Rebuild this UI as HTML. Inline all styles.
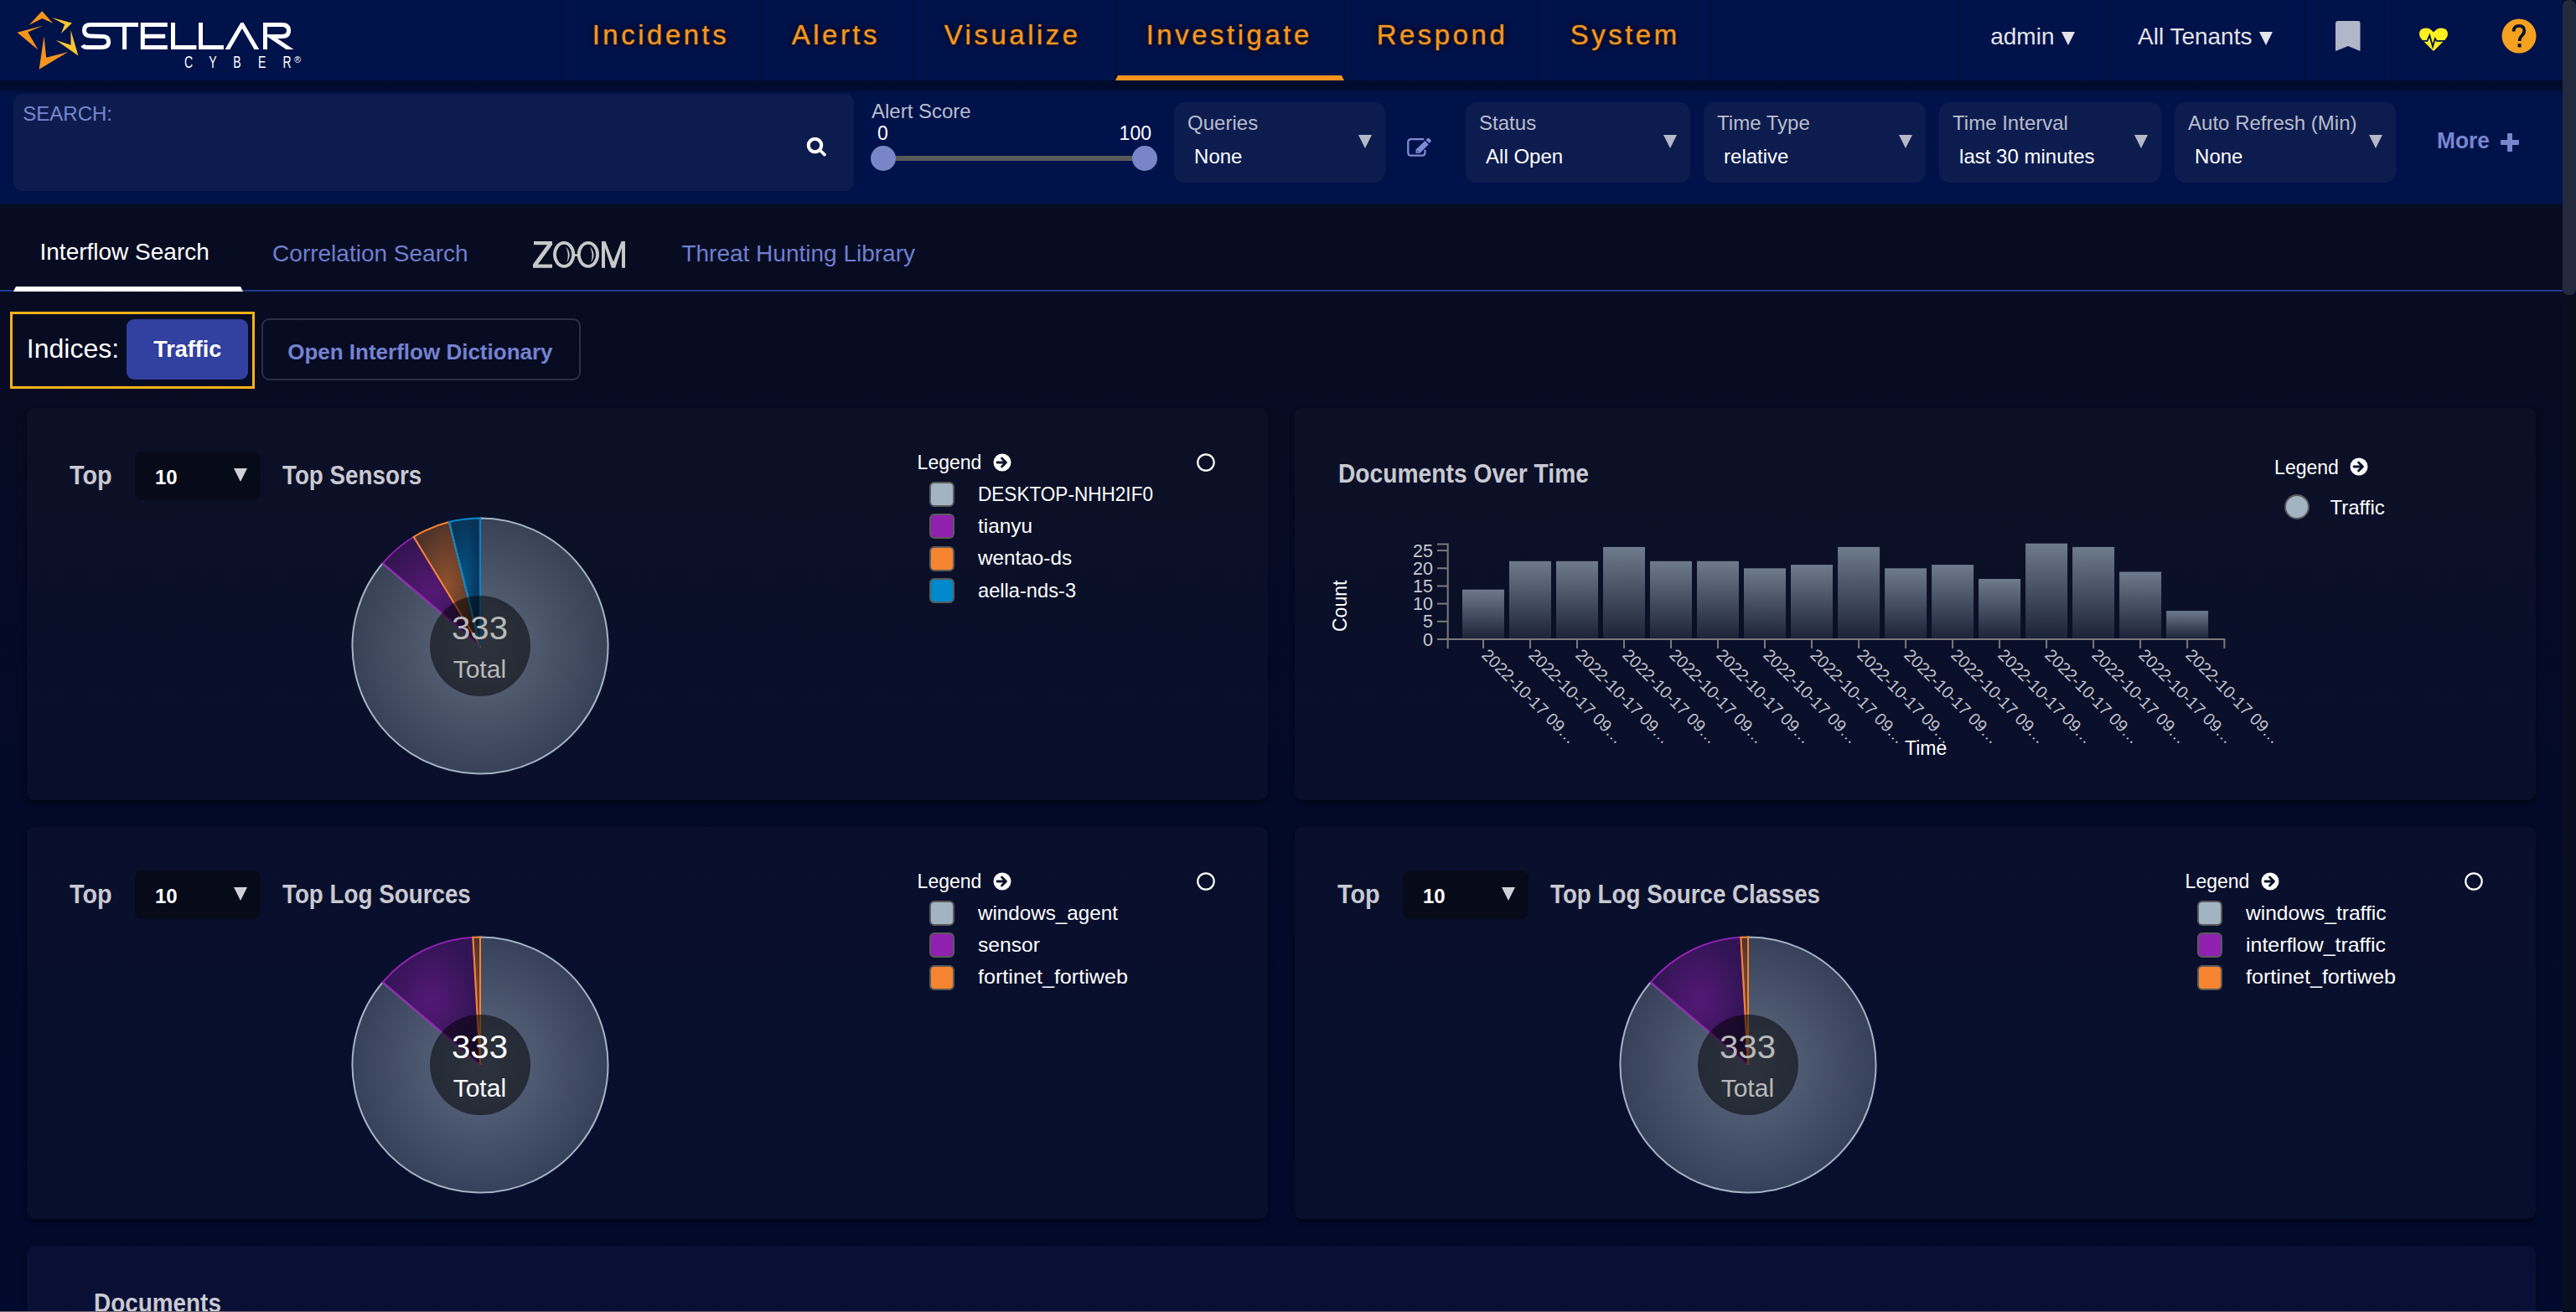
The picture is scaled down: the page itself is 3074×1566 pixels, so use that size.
<!DOCTYPE html>
<html><head><meta charset="utf-8"><title>Stellar Cyber</title>
<style>
html,body{margin:0;padding:0}
body{width:3074px;height:1566px;overflow:hidden;position:relative;background:#050a24;font-family:"Liberation Sans", sans-serif}
.t{position:absolute;white-space:nowrap;font-family:"Liberation Sans", sans-serif}
</style></head><body>
<div style="position:absolute;left:0px;top:244px;width:3058px;height:1322px;background:linear-gradient(180deg,#080c21 0px,#060b23 250px,#030a28 700px,#010a2c 1322px)"></div>
<div style="position:absolute;left:3058px;top:0px;width:16px;height:1566px;background:#080d20"></div>
<div style="position:absolute;left:3058px;top:0px;width:15.5px;height:352px;background:#232a3d;border-radius:7px"></div>
<div style="position:absolute;left:0px;top:0px;width:3058px;height:96px;background:#00124a"></div>
<div style="position:absolute;left:670px;top:0px;width:2px;height:96px;background:#000f3e"></div>
<div style="position:absolute;left:907px;top:0px;width:2px;height:96px;background:#000f3e"></div>
<div style="position:absolute;left:1089px;top:0px;width:2px;height:96px;background:#000f3e"></div>
<div style="position:absolute;left:1331px;top:0px;width:2px;height:96px;background:#000f3e"></div>
<div style="position:absolute;left:1603px;top:0px;width:2px;height:96px;background:#000f3e"></div>
<div style="position:absolute;left:1834px;top:0px;width:2px;height:96px;background:#000f3e"></div>
<div style="position:absolute;left:2041px;top:0px;width:2px;height:96px;background:#000f3e"></div>
<div style="position:absolute;left:2337px;top:0px;width:2px;height:96px;background:#000f3e"></div>
<div style="position:absolute;left:2514px;top:0px;width:2px;height:96px;background:#000f3e"></div>
<div style="position:absolute;left:2750px;top:0px;width:2px;height:96px;background:#000f3e"></div>
<div style="position:absolute;left:2853px;top:0px;width:2px;height:96px;background:#000f3e"></div>
<div style="position:absolute;left:2952px;top:0px;width:2px;height:96px;background:#000f3e"></div>
<svg style="position:absolute;left:0;top:0" width="3058" height="96"><polygon points="1334,90 1601,90 1604,96 1331,96" fill="#f7941d"/></svg>
<div class="t" style="left:706.7px;top:25.2px;font-size:33px;line-height:33px;color:#f7961f;font-weight:400;letter-spacing:3.5px;text-shadow:0 0 2px rgba(255,170,60,.55),0 0 5px rgba(0,0,0,.9),0 0 8px rgba(0,0,0,.6)">Incidents</div>
<div class="t" style="left:944.7px;top:25.2px;font-size:33px;line-height:33px;color:#f7961f;font-weight:400;letter-spacing:3.5px;text-shadow:0 0 2px rgba(255,170,60,.55),0 0 5px rgba(0,0,0,.9),0 0 8px rgba(0,0,0,.6)">Alerts</div>
<div class="t" style="left:1126.7px;top:25.2px;font-size:33px;line-height:33px;color:#f7961f;font-weight:400;letter-spacing:3.5px;text-shadow:0 0 2px rgba(255,170,60,.55),0 0 5px rgba(0,0,0,.9),0 0 8px rgba(0,0,0,.6)">Visualize</div>
<div class="t" style="left:1367.7px;top:25.2px;font-size:33px;line-height:33px;color:#f7961f;font-weight:400;letter-spacing:3.5px;text-shadow:0 0 2px rgba(255,170,60,.55),0 0 5px rgba(0,0,0,.9),0 0 8px rgba(0,0,0,.6)">Investigate</div>
<div class="t" style="left:1642.7px;top:25.2px;font-size:33px;line-height:33px;color:#f7961f;font-weight:400;letter-spacing:3.5px;text-shadow:0 0 2px rgba(255,170,60,.55),0 0 5px rgba(0,0,0,.9),0 0 8px rgba(0,0,0,.6)">Respond</div>
<div class="t" style="left:1873.7px;top:25.2px;font-size:33px;line-height:33px;color:#f7961f;font-weight:400;letter-spacing:3.5px;text-shadow:0 0 2px rgba(255,170,60,.55),0 0 5px rgba(0,0,0,.9),0 0 8px rgba(0,0,0,.6)">System</div>
<div class="t" style="left:2375.2px;top:30.2px;font-size:28px;line-height:28px;color:#e4e4ea;font-weight:400;letter-spacing:0px;">admin</div>
<div class="t" style="left:2551.0px;top:30.2px;font-size:28px;line-height:28px;color:#e4e4ea;font-weight:400;letter-spacing:0px;">All Tenants</div>
<svg style="position:absolute;left:2460px;top:37.5px" width="16" height="16"><polygon points="0,0 16,0 8,16" fill="#e4e4ea"/></svg>
<svg style="position:absolute;left:2696px;top:37.5px" width="16" height="16"><polygon points="0,0 16,0 8,16" fill="#e4e4ea"/></svg>
<svg style="position:absolute;left:2787px;top:25px" width="30" height="36" viewBox="0 0 30 36"><path d="M3,0 H27 Q29.5,0 29.5,3 V36 L15,30 L0,36 V3 Q0,0 3,0 Z" fill="#b1b7c9"/></svg>
<svg style="position:absolute;left:2887px;top:33px" width="34" height="29" viewBox="0 0 36 31" preserveAspectRatio="none"><path d="M18,30 L3.5,15.5 Q0,12 0,8.5 Q0,0.5 8.5,0.5 Q14,0.5 18,6 Q22,0.5 27.5,0.5 Q36,0.5 36,8.5 Q36,12 32.5,15.5 Z" fill="#fff01f"/><polyline points="3,17 10,17 13,10 17,24 20,14 22,17 33,17" fill="none" stroke="#00124a" stroke-width="2"/></svg>
<svg style="position:absolute;left:2985px;top:22px" width="42" height="42" viewBox="0 0 42 42"><circle cx="21" cy="21" r="20.5" fill="#f5a020"/><path d="M14.6,15.6 Q14.6,8.8 21,8.8 Q27.3,8.8 27.3,14.8 Q27.3,18 24,21 Q21.6,23.2 21.6,27" fill="none" stroke="#0a1030" stroke-width="3.7"/><rect x="19.6" y="30.2" width="4" height="4.2" fill="#0a1030"/></svg>
<svg style="position:absolute;left:0;top:0" width="380" height="96"><polygon points="34.5,30.0 50.2,13.2 63.2,27.8 50.4,22.1" fill="#f7941d"/><polygon points="62.0,21.1 86.0,27.5 72.9,40.0 77.2,29.3" fill="#f9c433"/><polygon points="51.6,30.6 20.5,38.8 45.5,59.5 33.3,38.2" fill="#f7941d"/><polygon points="52.5,43.1 46.7,82.7 81.2,62.0 55.2,68.7" fill="#f7941d"/><polygon points="84.5,36.0 93.4,66.5 66.8,47.9 84.5,53.7" fill="#f9c433"/><defs><clipPath id="lc"><rect x="90" y="27" width="270" height="32"/></clipPath></defs><g fill="none" stroke="#fff" stroke-width="5" clip-path="url(#lc)"><path d="M132.5,29.5 H108 Q100.5,29.5 100.5,36 Q100.5,42.7 108,43 L123,43.5 Q129.7,44 129.7,50 Q129.7,56.5 121,56.5 H104 Q100,56.5 98.5,54"/><path d="M131,29.5 H165 M148.6,29.5 V59"/><path d="M199.8,29.5 H170.3 V56.5 H199.8 M170.3,43.3 H197.2"/><path d="M206.5,27 V56.5 H234.4"/><path d="M239.5,27 V56.5 H266.9"/></g><polygon points="268.5,59 287.3,27 290.5,27 309.3,59 303.5,59 288.9,34 274.3,59" fill="#fff"/><g fill="none" stroke="#fff" stroke-width="5" clip-path="url(#lc)"><path d="M316.5,60 V29.5 H336 Q344.5,29.5 344.5,36.5 Q344.5,43.5 336,43.5 H323 L349,61"/></g><text x="0" y="0" transform="translate(220.0,80.8) scale(0.72,1)" font-family="Liberation Sans" font-size="19.5" fill="#fff">C</text><text x="0" y="0" transform="translate(249.29999999999998,80.8) scale(0.72,1)" font-family="Liberation Sans" font-size="19.5" fill="#fff">Y</text><text x="0" y="0" transform="translate(278.2,80.8) scale(0.72,1)" font-family="Liberation Sans" font-size="19.5" fill="#fff">B</text><text x="0" y="0" transform="translate(308.0,80.8) scale(0.72,1)" font-family="Liberation Sans" font-size="19.5" fill="#fff">E</text><text x="0" y="0" transform="translate(337.4,80.8) scale(0.72,1)" font-family="Liberation Sans" font-size="19.5" fill="#fff">R</text><text x="351" y="75" font-family="Liberation Sans" font-size="11" fill="#fff">®</text></svg>
<div style="position:absolute;left:0px;top:96px;width:3058px;height:148px;background:#00124a"></div>
<div style="position:absolute;left:0px;top:96px;width:3058px;height:18px;background:linear-gradient(180deg,#000a2c 0px,#000b2e 10px,rgba(0,12,50,0) 16px)"></div>
<div style="position:absolute;left:16px;top:112px;width:1003px;height:116px;background:#0d1c4e;border-radius:11px"></div>
<div class="t" style="left:27.3px;top:123.8px;font-size:24px;line-height:24px;color:#7886d0;font-weight:400;letter-spacing:0px;">SEARCH:</div>
<svg style="position:absolute;left:962px;top:164px" width="24" height="24" viewBox="0 0 24 24"><circle cx="10.5" cy="9.5" r="7.7" fill="none" stroke="#fff" stroke-width="4.1"/><line x1="16.2" y1="15" x2="22" y2="20.6" stroke="#fff" stroke-width="3.6" stroke-linecap="round"/></svg>
<div class="t" style="left:1040.0px;top:121.2px;font-size:24px;line-height:24px;color:#b9bdcc;font-weight:400;letter-spacing:0px;">Alert Score</div>
<div class="t" style="left:1047.1px;top:148.0px;font-size:23px;line-height:23px;color:#fff;font-weight:400;letter-spacing:0px;">0</div>
<div class="t" style="left:1335.6px;top:148.0px;font-size:23px;line-height:23px;color:#fff;font-weight:400;letter-spacing:0px;">100</div>
<div style="position:absolute;left:1054px;top:186px;width:312px;height:6px;background:#5a5a5a"></div>
<div style="position:absolute;left:1039px;top:174px;width:30px;height:30px;background:#7886c8;border-radius:50%"></div>
<div style="position:absolute;left:1351px;top:174px;width:30px;height:30px;background:#7886c8;border-radius:50%"></div>
<div style="position:absolute;left:1401px;top:122px;width:252px;height:96px;background:#0d1c4e;border-radius:13px"></div>
<div class="t" style="left:1417.1px;top:135.4px;font-size:24px;line-height:24px;color:#b9bdcc;font-weight:400;letter-spacing:0px;">Queries</div>
<div class="t" style="left:1425.1px;top:175.2px;font-size:24px;line-height:24px;color:#fff;font-weight:400;letter-spacing:0px;">None</div>
<svg style="position:absolute;left:1621px;top:161px" width="16" height="16"><polygon points="0,0 16,0 8,16" fill="#b4b8c8"/></svg>
<div style="position:absolute;left:1749px;top:122px;width:268px;height:96px;background:#0d1c4e;border-radius:13px"></div>
<div class="t" style="left:1765.1px;top:135.4px;font-size:24px;line-height:24px;color:#b9bdcc;font-weight:400;letter-spacing:0px;">Status</div>
<div class="t" style="left:1773.1px;top:175.2px;font-size:24px;line-height:24px;color:#fff;font-weight:400;letter-spacing:0px;">All Open</div>
<svg style="position:absolute;left:1985px;top:161px" width="16" height="16"><polygon points="0,0 16,0 8,16" fill="#b4b8c8"/></svg>
<div style="position:absolute;left:2033px;top:122px;width:265px;height:96px;background:#0d1c4e;border-radius:13px"></div>
<div class="t" style="left:2049.1px;top:135.4px;font-size:24px;line-height:24px;color:#b9bdcc;font-weight:400;letter-spacing:0px;">Time Type</div>
<div class="t" style="left:2057.1px;top:175.2px;font-size:24px;line-height:24px;color:#fff;font-weight:400;letter-spacing:0px;">relative</div>
<svg style="position:absolute;left:2266px;top:161px" width="16" height="16"><polygon points="0,0 16,0 8,16" fill="#b4b8c8"/></svg>
<div style="position:absolute;left:2314px;top:122px;width:265px;height:96px;background:#0d1c4e;border-radius:13px"></div>
<div class="t" style="left:2330.1px;top:135.4px;font-size:24px;line-height:24px;color:#b9bdcc;font-weight:400;letter-spacing:0px;">Time Interval</div>
<div class="t" style="left:2338.1px;top:175.2px;font-size:24px;line-height:24px;color:#fff;font-weight:400;letter-spacing:0px;">last 30 minutes</div>
<svg style="position:absolute;left:2547px;top:161px" width="16" height="16"><polygon points="0,0 16,0 8,16" fill="#b4b8c8"/></svg>
<div style="position:absolute;left:2595px;top:122px;width:264px;height:96px;background:#0d1c4e;border-radius:13px"></div>
<div class="t" style="left:2611.1px;top:135.4px;font-size:24px;line-height:24px;color:#b9bdcc;font-weight:400;letter-spacing:0px;">Auto Refresh (Min)</div>
<div class="t" style="left:2619.1px;top:175.2px;font-size:24px;line-height:24px;color:#fff;font-weight:400;letter-spacing:0px;">None</div>
<svg style="position:absolute;left:2827px;top:161px" width="16" height="16"><polygon points="0,0 16,0 8,16" fill="#b4b8c8"/></svg>
<svg style="position:absolute;left:1670px;top:155px" width="50" height="40" viewBox="0 0 50 40"><path d="M29.3,11.1 H14 Q10.3,11.1 10.3,14.8 V27 Q10.3,30.7 14,30.7 H26.8 Q30.5,30.7 30.5,27 V23.8" fill="none" stroke="#7f8ad6" stroke-width="2.3"/><polygon points="19.2,27.7 19.8,23.2 30.5,13.1 34.8,17.5 24.4,27.7" fill="#7f8ad6"/><polygon points="31.4,12.1 33.3,10.3 Q34.5,9.3 35.8,10.4 L37.3,11.9 Q38.4,13.1 37.3,14.3 L35.6,16.1" fill="#7f8ad6"/><path d="M31.4,12.1 L33.3,10.3 Q34.5,9.3 35.8,10.4 L37.3,11.9 Q38.4,13.1 37.3,14.3 L35.6,16.1 Z" fill="#7f8ad6"/><polygon points="21.2,26.2 21.4,24.6 23,26.2" fill="#001246"/></svg>
<div class="t" style="left:2907.5px;top:154.0px;font-size:28px;line-height:28px;color:#7886d0;font-weight:700;letter-spacing:0px;transform:scaleX(0.94);transform-origin:0 0">More</div>
<div style="position:absolute;left:2984px;top:166.7px;width:22px;height:6.2px;background:#7886d0;border-radius:1px"></div>
<div style="position:absolute;left:2991.9px;top:159px;width:6.2px;height:22px;background:#7886d0;border-radius:1px"></div>
<div style="position:absolute;left:0px;top:346px;width:3058px;height:2px;background:#1f3a8c"></div>
<svg style="position:absolute;left:0;top:340px" width="320" height="10"><polygon points="19,2 287,2 290,8 16,8" fill="#fff"/></svg>
<div class="t" style="left:47.5px;top:287.2px;font-size:28px;line-height:28px;color:#fff;font-weight:400;letter-spacing:0px;">Interflow Search</div>
<div class="t" style="left:325.1px;top:289.0px;font-size:28px;line-height:28px;color:#6f7fd0;font-weight:400;letter-spacing:0px;">Correlation Search</div>
<div class="t" style="left:813.4px;top:289.0px;font-size:28px;line-height:28px;color:#6f7fd0;font-weight:400;letter-spacing:0px;">Threat Hunting Library</div>
<svg style="position:absolute;left:620px;top:270px" width="140" height="60" viewBox="620 270 140 60">
<polygon points="637,288 659,288 659,292.3 642,315.4 659,315.4 659,319.7 636,319.7 636,315.4 653,292.3 637,292.3" fill="#c8c8c8"/>
<ellipse cx="673.1" cy="303.85" rx="11.15" ry="13.95" fill="none" stroke="#c8c8c8" stroke-width="3.8"/>
<ellipse cx="701.9" cy="303.85" rx="11.15" ry="13.95" fill="none" stroke="#c8c8c8" stroke-width="3.8"/>
<rect x="684" y="303.3" width="7" height="2.6" fill="#c8c8c8"/>
<path d="M675.2,294.6 Q683.6,303.5 676.4,313.2 Q679.6,303.5 675.2,294.6 Z" fill="#c8c8c8"/>
<path d="M704,294.6 Q712.4,303.5 705.2,313.2 Q708.4,303.5 704,294.6 Z" fill="#c8c8c8"/>
<polygon points="718,288 722.5,288 732,312.5 741.5,288 746,288 746,319.7 742,319.7 742,296 734.2,319.7 729.8,319.7 722,296 722,319.7 718,319.7" fill="#c8c8c8"/>
</svg>
<div style="position:absolute;left:12px;top:372px;width:286px;height:86px;border:3px solid #fbb117"></div>
<div class="t" style="left:31.8px;top:400.1px;font-size:32px;line-height:32px;color:#fff;font-weight:400;letter-spacing:0px;">Indices:</div>
<div style="position:absolute;left:151px;top:381px;width:145px;height:72px;background:#3240a0;border-radius:9px"></div>
<div class="t" style="left:183.2px;top:404.1px;font-size:27px;line-height:27px;color:#fff;font-weight:700;letter-spacing:0px;">Traffic</div>
<div style="position:absolute;left:312px;top:380px;width:381px;height:74px;border:2px solid #2a3046;border-radius:9px;box-sizing:border-box"></div>
<div class="t" style="left:343.2px;top:406.9px;font-size:26px;line-height:26px;color:#7483d0;font-weight:700;letter-spacing:0px;">Open Interflow Dictionary</div>
<div style="position:absolute;left:32px;top:487px;width:1481px;height:468px;background:rgba(190,165,125,0.04);border-radius:9px;box-shadow:0 3px 5px rgba(0,0,0,.55)"></div>
<div style="position:absolute;left:1545px;top:487px;width:1481px;height:468px;background:rgba(190,165,125,0.04);border-radius:9px;box-shadow:0 3px 5px rgba(0,0,0,.55)"></div>
<div style="position:absolute;left:32px;top:987px;width:1481px;height:468px;background:rgba(190,165,125,0.04);border-radius:9px;box-shadow:0 3px 5px rgba(0,0,0,.55)"></div>
<div style="position:absolute;left:1545px;top:987px;width:1481px;height:468px;background:rgba(190,165,125,0.04);border-radius:9px;box-shadow:0 3px 5px rgba(0,0,0,.55)"></div>
<div style="position:absolute;left:32px;top:1487px;width:2994px;height:200px;background:rgba(200,150,255,0.045);border-radius:9px;box-shadow:0 3px 5px rgba(0,0,0,.55)"></div>
<div class="t" style="left:83.4px;top:551.0px;font-size:32px;line-height:32px;color:#c9c9d1;font-weight:700;letter-spacing:0px;transform:scaleX(0.90);transform-origin:0 0">Top</div>
<div style="position:absolute;left:161px;top:539px;width:150px;height:58px;background:#070a18;border-radius:9px"></div>
<div class="t" style="left:185.0px;top:558.2px;font-size:24px;line-height:24px;color:#fff;font-weight:700;letter-spacing:0px;">10</div>
<svg style="position:absolute;left:279px;top:559px" width="16" height="16"><polygon points="0,0 16,0 8,16" fill="#d0d0d8"/></svg>
<div class="t" style="left:337.4px;top:551.0px;font-size:32px;line-height:32px;color:#c9c9d1;font-weight:700;letter-spacing:0px;transform:scaleX(0.868);transform-origin:0 0">Top Sensors</div>
<div class="t" style="left:1094.6px;top:540.9px;font-size:23px;line-height:23px;color:#fff;font-weight:400;letter-spacing:0px;">Legend</div>
<svg style="position:absolute;left:1185px;top:541px" width="22" height="22" viewBox="0 0 22 22"><circle cx="11" cy="11" r="10.5" fill="#fff"/><path d="M5,11 H15 M10.5,6 L15.5,11 L10.5,16" fill="none" stroke="#0b1129" stroke-width="2.8" stroke-linecap="round" stroke-linejoin="round"/></svg>
<svg style="position:absolute;left:1428px;top:541px" width="22" height="22"><circle cx="11" cy="11" r="9.7" fill="none" stroke="#fff" stroke-width="2.2"/></svg>
<div style="position:absolute;left:1109px;top:575px;width:30px;height:30px;background:#a2b4c2;border:2px solid #5a5a5a;border-radius:6px;box-sizing:border-box"></div>
<div class="t" style="left:1166.8px;top:577.6px;font-size:24px;line-height:24px;color:#fff;font-weight:400;letter-spacing:0px;transform:scaleX(0.9401709401709402);transform-origin:0 0">DESKTOP-NHH2IF0</div>
<div style="position:absolute;left:1109px;top:613px;width:30px;height:30px;background:#9020b0;border:2px solid #5a5a5a;border-radius:6px;box-sizing:border-box"></div>
<div class="t" style="left:1166.8px;top:615.9px;font-size:24px;line-height:24px;color:#fff;font-weight:400;letter-spacing:0px;transform:scaleX(1.015625);transform-origin:0 0">tianyu</div>
<div style="position:absolute;left:1109px;top:652px;width:30px;height:30px;background:#f58530;border:2px solid #5a5a5a;border-radius:6px;box-sizing:border-box"></div>
<div class="t" style="left:1166.8px;top:654.2px;font-size:24px;line-height:24px;color:#fff;font-weight:400;letter-spacing:0px;transform:scaleX(1.011743450767841);transform-origin:0 0">wentao-ds</div>
<div style="position:absolute;left:1109px;top:690px;width:30px;height:30px;background:#0088cc;border:2px solid #5a5a5a;border-radius:6px;box-sizing:border-box"></div>
<div class="t" style="left:1166.8px;top:692.5px;font-size:24px;line-height:24px;color:#fff;font-weight:400;letter-spacing:0px;transform:scaleX(0.9856781802864364);transform-origin:0 0">aella-nds-3</div>
<svg style="position:absolute;left:412.79999999999995px;top:611px" width="320" height="320" viewBox="412.79999999999995 611 320 320"><defs><radialGradient id="ga0"><stop offset="0" stop-color="#a2b4c2" stop-opacity="0.56"/><stop offset="1" stop-color="#a2b4c2" stop-opacity="0.3"/></radialGradient><radialGradient id="ga1"><stop offset="0" stop-color="#9020b0" stop-opacity="0.56"/><stop offset="1" stop-color="#9020b0" stop-opacity="0.3"/></radialGradient><radialGradient id="ga2"><stop offset="0" stop-color="#f58530" stop-opacity="0.56"/><stop offset="1" stop-color="#f58530" stop-opacity="0.3"/></radialGradient><radialGradient id="ga3"><stop offset="0" stop-color="#0088cc" stop-opacity="0.56"/><stop offset="1" stop-color="#0088cc" stop-opacity="0.3"/></radialGradient></defs><path d="M572.8,771 L572.80,618.50 A152.5,152.5 0 1 1 456.44,672.42 Z" fill="url(#ga0)" stroke="#a2b4c2" stroke-width="2"/><path d="M572.8,771 L456.44,672.42 A152.5,152.5 0 0 1 493.46,640.77 Z" fill="url(#ga1)" stroke="#9020b0" stroke-width="2"/><path d="M572.8,771 L493.46,640.77 A152.5,152.5 0 0 1 535.77,623.06 Z" fill="url(#ga2)" stroke="#f58530" stroke-width="2"/><path d="M572.8,771 L535.77,623.06 A152.5,152.5 0 0 1 572.80,618.50 Z" fill="url(#ga3)" stroke="#0088cc" stroke-width="2"/><circle cx="572.8" cy="771" r="60" fill="rgba(0,0,0,0.52)"/></svg>
<div class="t" style="left:538.7px;top:730.4px;font-size:39px;line-height:39px;color:#b9b9b9;font-weight:400;letter-spacing:0px;transform:scaleX(1.03);transform-origin:0 0">333</div>
<div class="t" style="left:540.7px;top:783.7px;font-size:30px;line-height:30px;color:#b9b9b9;font-weight:400;letter-spacing:0px;">Total</div>
<div class="t" style="left:83.4px;top:1051.0px;font-size:32px;line-height:32px;color:#c9c9d1;font-weight:700;letter-spacing:0px;transform:scaleX(0.90);transform-origin:0 0">Top</div>
<div style="position:absolute;left:161px;top:1039px;width:150px;height:58px;background:#070a18;border-radius:9px"></div>
<div class="t" style="left:185.0px;top:1058.2px;font-size:24px;line-height:24px;color:#fff;font-weight:700;letter-spacing:0px;">10</div>
<svg style="position:absolute;left:279px;top:1059px" width="16" height="16"><polygon points="0,0 16,0 8,16" fill="#d0d0d8"/></svg>
<div class="t" style="left:337.4px;top:1051.0px;font-size:32px;line-height:32px;color:#c9c9d1;font-weight:700;letter-spacing:0px;transform:scaleX(0.868);transform-origin:0 0">Top Log Sources</div>
<div class="t" style="left:1094.6px;top:1040.9px;font-size:23px;line-height:23px;color:#fff;font-weight:400;letter-spacing:0px;">Legend</div>
<svg style="position:absolute;left:1185px;top:1041px" width="22" height="22" viewBox="0 0 22 22"><circle cx="11" cy="11" r="10.5" fill="#fff"/><path d="M5,11 H15 M10.5,6 L15.5,11 L10.5,16" fill="none" stroke="#0b1129" stroke-width="2.8" stroke-linecap="round" stroke-linejoin="round"/></svg>
<svg style="position:absolute;left:1428px;top:1041px" width="22" height="22"><circle cx="11" cy="11" r="9.7" fill="none" stroke="#fff" stroke-width="2.2"/></svg>
<div style="position:absolute;left:1109px;top:1075px;width:30px;height:30px;background:#a2b4c2;border:2px solid #5a5a5a;border-radius:6px;box-sizing:border-box"></div>
<div class="t" style="left:1166.8px;top:1077.6px;font-size:24px;line-height:24px;color:#fff;font-weight:400;letter-spacing:0px;transform:scaleX(1.0090634441087614);transform-origin:0 0">windows_agent</div>
<div style="position:absolute;left:1109px;top:1113px;width:30px;height:30px;background:#9020b0;border:2px solid #5a5a5a;border-radius:6px;box-sizing:border-box"></div>
<div class="t" style="left:1166.8px;top:1115.9px;font-size:24px;line-height:24px;color:#fff;font-weight:400;letter-spacing:0px;transform:scaleX(1.0277777777777777);transform-origin:0 0">sensor</div>
<div style="position:absolute;left:1109px;top:1152px;width:30px;height:30px;background:#f58530;border:2px solid #5a5a5a;border-radius:6px;box-sizing:border-box"></div>
<div class="t" style="left:1166.8px;top:1154.2px;font-size:24px;line-height:24px;color:#fff;font-weight:400;letter-spacing:0px;transform:scaleX(1.0480093676814988);transform-origin:0 0">fortinet_fortiweb</div>
<svg style="position:absolute;left:412.79999999999995px;top:1111px" width="320" height="320" viewBox="412.79999999999995 1111 320 320"><defs><radialGradient id="gb0"><stop offset="0" stop-color="#a2b4c2" stop-opacity="0.56"/><stop offset="1" stop-color="#a2b4c2" stop-opacity="0.3"/></radialGradient><radialGradient id="gb1"><stop offset="0" stop-color="#9020b0" stop-opacity="0.56"/><stop offset="1" stop-color="#9020b0" stop-opacity="0.3"/></radialGradient><radialGradient id="gb2"><stop offset="0" stop-color="#f58530" stop-opacity="0.56"/><stop offset="1" stop-color="#f58530" stop-opacity="0.3"/></radialGradient></defs><path d="M572.8,1271 L572.80,1118.50 A152.5,152.5 0 1 1 456.44,1172.42 Z" fill="url(#gb0)" stroke="#a2b4c2" stroke-width="2"/><path d="M572.8,1271 L456.44,1172.42 A152.5,152.5 0 0 1 564.17,1118.74 Z" fill="url(#gb1)" stroke="#9020b0" stroke-width="2"/><path d="M572.8,1271 L564.17,1118.74 A152.5,152.5 0 0 1 572.80,1118.50 Z" fill="url(#gb2)" stroke="#f58530" stroke-width="2"/><circle cx="572.8" cy="1271" r="60" fill="rgba(0,0,0,0.52)"/></svg>
<div class="t" style="left:538.7px;top:1230.3px;font-size:39px;line-height:39px;color:#ffffff;font-weight:400;letter-spacing:0px;transform:scaleX(1.03);transform-origin:0 0">333</div>
<div class="t" style="left:540.7px;top:1283.7px;font-size:30px;line-height:30px;color:#ffffff;font-weight:400;letter-spacing:0px;">Total</div>
<div class="t" style="left:1596.4px;top:1051.0px;font-size:32px;line-height:32px;color:#c9c9d1;font-weight:700;letter-spacing:0px;transform:scaleX(0.90);transform-origin:0 0">Top</div>
<div style="position:absolute;left:1674px;top:1039px;width:150px;height:58px;background:#070a18;border-radius:9px"></div>
<div class="t" style="left:1698.0px;top:1058.2px;font-size:24px;line-height:24px;color:#fff;font-weight:700;letter-spacing:0px;">10</div>
<svg style="position:absolute;left:1792px;top:1059px" width="16" height="16"><polygon points="0,0 16,0 8,16" fill="#d0d0d8"/></svg>
<div class="t" style="left:1850.4px;top:1051.0px;font-size:32px;line-height:32px;color:#c9c9d1;font-weight:700;letter-spacing:0px;transform:scaleX(0.868);transform-origin:0 0">Top Log Source Classes</div>
<div class="t" style="left:2607.6px;top:1040.9px;font-size:23px;line-height:23px;color:#fff;font-weight:400;letter-spacing:0px;">Legend</div>
<svg style="position:absolute;left:2698px;top:1041px" width="22" height="22" viewBox="0 0 22 22"><circle cx="11" cy="11" r="10.5" fill="#fff"/><path d="M5,11 H15 M10.5,6 L15.5,11 L10.5,16" fill="none" stroke="#0b1129" stroke-width="2.8" stroke-linecap="round" stroke-linejoin="round"/></svg>
<svg style="position:absolute;left:2941px;top:1041px" width="22" height="22"><circle cx="11" cy="11" r="9.7" fill="none" stroke="#fff" stroke-width="2.2"/></svg>
<div style="position:absolute;left:2622px;top:1075px;width:30px;height:30px;background:#a2b4c2;border:2px solid #5a5a5a;border-radius:6px;box-sizing:border-box"></div>
<div class="t" style="left:2679.8px;top:1077.6px;font-size:24px;line-height:24px;color:#fff;font-weight:400;letter-spacing:0px;transform:scaleX(1.023838630806846);transform-origin:0 0">windows_traffic</div>
<div style="position:absolute;left:2622px;top:1113px;width:30px;height:30px;background:#9020b0;border:2px solid #5a5a5a;border-radius:6px;box-sizing:border-box"></div>
<div class="t" style="left:2679.8px;top:1115.9px;font-size:24px;line-height:24px;color:#fff;font-weight:400;letter-spacing:0px;transform:scaleX(1.0372670807453417);transform-origin:0 0">interflow_traffic</div>
<div style="position:absolute;left:2622px;top:1152px;width:30px;height:30px;background:#f58530;border:2px solid #5a5a5a;border-radius:6px;box-sizing:border-box"></div>
<div class="t" style="left:2679.8px;top:1154.2px;font-size:24px;line-height:24px;color:#fff;font-weight:400;letter-spacing:0px;transform:scaleX(1.0480093676814988);transform-origin:0 0">fortinet_fortiweb</div>
<svg style="position:absolute;left:1925.8000000000002px;top:1111px" width="320" height="320" viewBox="1925.8000000000002 1111 320 320"><defs><radialGradient id="gc0"><stop offset="0" stop-color="#a2b4c2" stop-opacity="0.56"/><stop offset="1" stop-color="#a2b4c2" stop-opacity="0.3"/></radialGradient><radialGradient id="gc1"><stop offset="0" stop-color="#9020b0" stop-opacity="0.56"/><stop offset="1" stop-color="#9020b0" stop-opacity="0.3"/></radialGradient><radialGradient id="gc2"><stop offset="0" stop-color="#f58530" stop-opacity="0.56"/><stop offset="1" stop-color="#f58530" stop-opacity="0.3"/></radialGradient></defs><path d="M2085.8,1271 L2085.80,1118.50 A152.5,152.5 0 1 1 1969.44,1172.42 Z" fill="url(#gc0)" stroke="#a2b4c2" stroke-width="2"/><path d="M2085.8,1271 L1969.44,1172.42 A152.5,152.5 0 0 1 2077.17,1118.74 Z" fill="url(#gc1)" stroke="#9020b0" stroke-width="2"/><path d="M2085.8,1271 L2077.17,1118.74 A152.5,152.5 0 0 1 2085.80,1118.50 Z" fill="url(#gc2)" stroke="#f58530" stroke-width="2"/><circle cx="2085.8" cy="1271" r="60" fill="rgba(0,0,0,0.52)"/></svg>
<div class="t" style="left:2051.7px;top:1230.3px;font-size:39px;line-height:39px;color:#b9b9b9;font-weight:400;letter-spacing:0px;transform:scaleX(1.03);transform-origin:0 0">333</div>
<div class="t" style="left:2053.7px;top:1283.7px;font-size:30px;line-height:30px;color:#b9b9b9;font-weight:400;letter-spacing:0px;">Total</div>
<div class="t" style="left:1596.9px;top:549.5px;font-size:31px;line-height:31px;color:#c9c9d1;font-weight:700;letter-spacing:0px;transform:scaleX(0.91);transform-origin:0 0">Documents Over Time</div>
<div class="t" style="left:2714.1px;top:546.5px;font-size:23px;line-height:23px;color:#fff;font-weight:400;letter-spacing:0px;">Legend</div>
<svg style="position:absolute;left:2804px;top:546px" width="22" height="22" viewBox="0 0 22 22"><circle cx="11" cy="11" r="10.5" fill="#fff"/><path d="M5,11 H15 M10.5,6 L15.5,11 L10.5,16" fill="none" stroke="#0b1129" stroke-width="2.8" stroke-linecap="round" stroke-linejoin="round"/></svg>
<div style="position:absolute;left:2726px;top:590px;width:30px;height:30px;background:#a2b4c2;border:2px solid #5a5a5a;border-radius:50%;box-sizing:border-box"></div>
<div class="t" style="left:2780.5px;top:593.9px;font-size:24px;line-height:24px;color:#fff;font-weight:400;letter-spacing:0px;">Traffic</div>
<svg style="position:absolute;left:1540px;top:480px" width="1300" height="440" viewBox="1540 480 1300 440"><defs><linearGradient id="bar" x1="0" y1="0" x2="0" y2="1"><stop offset="0" stop-color="#6e7b8c"/><stop offset="1" stop-color="#1c2238"/></linearGradient></defs><rect x="1745.0" y="703.7" width="50" height="59.3" fill="url(#bar)"/><rect x="1801.0" y="669.8" width="50" height="93.2" fill="url(#bar)"/><rect x="1857.0" y="669.8" width="50" height="93.2" fill="url(#bar)"/><rect x="1913.0" y="652.9" width="50" height="110.1" fill="url(#bar)"/><rect x="1969.0" y="669.8" width="50" height="93.2" fill="url(#bar)"/><rect x="2025.0" y="669.8" width="50" height="93.2" fill="url(#bar)"/><rect x="2081.0" y="678.3" width="50" height="84.7" fill="url(#bar)"/><rect x="2137.0" y="674.1" width="50" height="88.9" fill="url(#bar)"/><rect x="2193.1" y="652.9" width="50" height="110.1" fill="url(#bar)"/><rect x="2249.1" y="678.3" width="50" height="84.7" fill="url(#bar)"/><rect x="2305.1" y="674.1" width="50" height="88.9" fill="url(#bar)"/><rect x="2361.1" y="691.0" width="50" height="72.0" fill="url(#bar)"/><rect x="2417.1" y="648.7" width="50" height="114.3" fill="url(#bar)"/><rect x="2473.1" y="652.9" width="50" height="110.1" fill="url(#bar)"/><rect x="2529.1" y="682.5" width="50" height="80.5" fill="url(#bar)"/><rect x="2585.1" y="729.1" width="50" height="33.9" fill="url(#bar)"/><path d="M1715,649.5 H1727.7 V763 H2654.4 V774 M1727.7,763 V774 M1715,763 H1727.7" fill="none" stroke="#7a7a7a" stroke-width="2"/><line x1="1715" y1="763.0" x2="1727.7" y2="763.0" stroke="#7a7a7a" stroke-width="2"/><text x="1710" y="770.6" text-anchor="end" font-family="Liberation Sans" font-size="21.5" fill="#c8c8d0">0</text><line x1="1715" y1="741.8" x2="1727.7" y2="741.8" stroke="#7a7a7a" stroke-width="2"/><text x="1710" y="749.4" text-anchor="end" font-family="Liberation Sans" font-size="21.5" fill="#c8c8d0">5</text><line x1="1715" y1="720.6" x2="1727.7" y2="720.6" stroke="#7a7a7a" stroke-width="2"/><text x="1710" y="728.2" text-anchor="end" font-family="Liberation Sans" font-size="21.5" fill="#c8c8d0">10</text><line x1="1715" y1="699.5" x2="1727.7" y2="699.5" stroke="#7a7a7a" stroke-width="2"/><text x="1710" y="707.1" text-anchor="end" font-family="Liberation Sans" font-size="21.5" fill="#c8c8d0">15</text><line x1="1715" y1="678.3" x2="1727.7" y2="678.3" stroke="#7a7a7a" stroke-width="2"/><text x="1710" y="685.9" text-anchor="end" font-family="Liberation Sans" font-size="21.5" fill="#c8c8d0">20</text><line x1="1715" y1="657.1" x2="1727.7" y2="657.1" stroke="#7a7a7a" stroke-width="2"/><text x="1710" y="664.7" text-anchor="end" font-family="Liberation Sans" font-size="21.5" fill="#c8c8d0">25</text><line x1="1770.0" y1="763" x2="1770.0" y2="774" stroke="#7a7a7a" stroke-width="2"/><text transform="translate(1767.0,783) rotate(45)" font-family="Liberation Sans" font-size="20" fill="#c0c0c8">2022-10-17 09…</text><line x1="1826.0" y1="763" x2="1826.0" y2="774" stroke="#7a7a7a" stroke-width="2"/><text transform="translate(1823.0,783) rotate(45)" font-family="Liberation Sans" font-size="20" fill="#c0c0c8">2022-10-17 09…</text><line x1="1882.0" y1="763" x2="1882.0" y2="774" stroke="#7a7a7a" stroke-width="2"/><text transform="translate(1879.0,783) rotate(45)" font-family="Liberation Sans" font-size="20" fill="#c0c0c8">2022-10-17 09…</text><line x1="1938.0" y1="763" x2="1938.0" y2="774" stroke="#7a7a7a" stroke-width="2"/><text transform="translate(1935.0,783) rotate(45)" font-family="Liberation Sans" font-size="20" fill="#c0c0c8">2022-10-17 09…</text><line x1="1994.0" y1="763" x2="1994.0" y2="774" stroke="#7a7a7a" stroke-width="2"/><text transform="translate(1991.0,783) rotate(45)" font-family="Liberation Sans" font-size="20" fill="#c0c0c8">2022-10-17 09…</text><line x1="2050.0" y1="763" x2="2050.0" y2="774" stroke="#7a7a7a" stroke-width="2"/><text transform="translate(2047.0,783) rotate(45)" font-family="Liberation Sans" font-size="20" fill="#c0c0c8">2022-10-17 09…</text><line x1="2106.0" y1="763" x2="2106.0" y2="774" stroke="#7a7a7a" stroke-width="2"/><text transform="translate(2103.0,783) rotate(45)" font-family="Liberation Sans" font-size="20" fill="#c0c0c8">2022-10-17 09…</text><line x1="2162.0" y1="763" x2="2162.0" y2="774" stroke="#7a7a7a" stroke-width="2"/><text transform="translate(2159.0,783) rotate(45)" font-family="Liberation Sans" font-size="20" fill="#c0c0c8">2022-10-17 09…</text><line x1="2218.1" y1="763" x2="2218.1" y2="774" stroke="#7a7a7a" stroke-width="2"/><text transform="translate(2215.1,783) rotate(45)" font-family="Liberation Sans" font-size="20" fill="#c0c0c8">2022-10-17 09…</text><line x1="2274.1" y1="763" x2="2274.1" y2="774" stroke="#7a7a7a" stroke-width="2"/><text transform="translate(2271.1,783) rotate(45)" font-family="Liberation Sans" font-size="20" fill="#c0c0c8">2022-10-17 09…</text><line x1="2330.1" y1="763" x2="2330.1" y2="774" stroke="#7a7a7a" stroke-width="2"/><text transform="translate(2327.1,783) rotate(45)" font-family="Liberation Sans" font-size="20" fill="#c0c0c8">2022-10-17 09…</text><line x1="2386.1" y1="763" x2="2386.1" y2="774" stroke="#7a7a7a" stroke-width="2"/><text transform="translate(2383.1,783) rotate(45)" font-family="Liberation Sans" font-size="20" fill="#c0c0c8">2022-10-17 09…</text><line x1="2442.1" y1="763" x2="2442.1" y2="774" stroke="#7a7a7a" stroke-width="2"/><text transform="translate(2439.1,783) rotate(45)" font-family="Liberation Sans" font-size="20" fill="#c0c0c8">2022-10-17 09…</text><line x1="2498.1" y1="763" x2="2498.1" y2="774" stroke="#7a7a7a" stroke-width="2"/><text transform="translate(2495.1,783) rotate(45)" font-family="Liberation Sans" font-size="20" fill="#c0c0c8">2022-10-17 09…</text><line x1="2554.1" y1="763" x2="2554.1" y2="774" stroke="#7a7a7a" stroke-width="2"/><text transform="translate(2551.1,783) rotate(45)" font-family="Liberation Sans" font-size="20" fill="#c0c0c8">2022-10-17 09…</text><line x1="2610.1" y1="763" x2="2610.1" y2="774" stroke="#7a7a7a" stroke-width="2"/><text transform="translate(2607.1,783) rotate(45)" font-family="Liberation Sans" font-size="20" fill="#c0c0c8">2022-10-17 09…</text><text transform="translate(1607,754) rotate(-90)" font-family="Liberation Sans" font-size="23" fill="#fff">Count</text><text x="2273" y="900.8" font-family="Liberation Sans" font-size="23" fill="#fff">Time</text></svg>
<div class="t" style="left:112.3px;top:1539.7px;font-size:31px;line-height:31px;color:#c9c9d1;font-weight:700;letter-spacing:0px;transform:scaleX(0.90);transform-origin:0 0">Documents</div>
<div style="position:absolute;left:0px;top:1565px;width:3058px;height:1px;background:#6a6a72"></div>
</body></html>
